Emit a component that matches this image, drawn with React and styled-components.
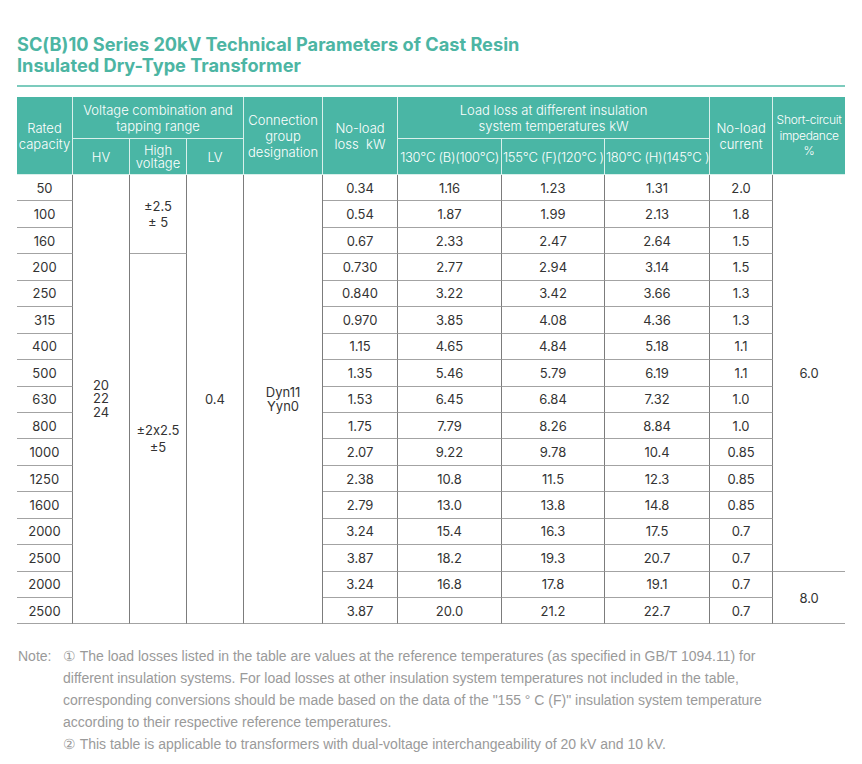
import styled, { createGlobalStyle } from "styled-components";

const GlobalStyle = createGlobalStyle`
    html, body {
        margin: 0;
        padding: 0;
        background: #fff;
    }
    body {
        font-family: Inter, "Noto Sans", "Liberation Sans", sans-serif;
        font-feature-settings: "calt" 0;
        color: #333;
    }
`;

const TEAL = "#4ab6a5";

const Page = styled.div`
    width: 828px;
    padding: 34px 17px 20px 17px;
`;

const Title = styled.h1`
    margin: 0;
    font-family: Inter, "Noto Sans", sans-serif;
    font-weight: 700;
    font-size: 18.2px;
    line-height: 21px;
    color: #4cb5a3;
    padding-bottom: 9px;
    border-bottom: 2px solid #7ccbbd;
`;

const Table = styled.table`
    margin-top: 10px;
    width: 828px;
    table-layout: fixed;
    border-collapse: separate;
    border-spacing: 0;
    font-size: 13px;
`;

const Head = styled.th`
    background: ${TEAL};
    color: #fff;
    font-weight: 300;
    font-size: ${p => p.$small ? "12px" : "13px"};
    line-height: ${p => p.$tight ? "13px" : p.$small ? "15.5px" : "16px"};
    text-align: center;
    vertical-align: middle;
    padding: 0 1px;
    height: ${p => p.$h || "auto"};
    border-right: ${p => p.$last ? "none" : "1.5px solid #d9f0eb"};
    border-bottom: 1.5px solid #d9f0eb;
    white-space: ${p => p.$nowrap ? "nowrap" : "normal"};
    letter-spacing: ${p => p.$nowrap ? "-0.3px" : "0"};
`;

const Cell = styled.td`
    text-align: center;
    vertical-align: middle;
    color: #333;
    font-weight: 400;
    font-size: 13px;
    line-height: ${p => p.$lh || "16px"};
    padding: 0;
    height: 25.45px;
    border-bottom: 1px solid #a3a3a3;
    border-right: ${p => p.$last ? "none" : "1px solid #7c7c7c"};
`;

const Note = styled.div`
    margin-top: 21px;
    display: grid;
    grid-template-columns: 46px 728px;
    font-family: "Liberation Sans", Arial, sans-serif;
    font-size: 14px;
    line-height: 22px;
    color: #9a9a9a;
`;

const NoteLabel = styled.span`
    padding-left: 1px;
`;

const NoteBody = styled.div`
    p {
        margin: 0;
    }
`;

const rows = [
    ["50", "0.34", "1.16", "1.23", "1.31", "2.0"],
    ["100", "0.54", "1.87", "1.99", "2.13", "1.8"],
    ["160", "0.67", "2.33", "2.47", "2.64", "1.5"],
    ["200", "0.730", "2.77", "2.94", "3.14", "1.5"],
    ["250", "0.840", "3.22", "3.42", "3.66", "1.3"],
    ["315", "0.970", "3.85", "4.08", "4.36", "1.3"],
    ["400", "1.15", "4.65", "4.84", "5.18", "1.1"],
    ["500", "1.35", "5.46", "5.79", "6.19", "1.1"],
    ["630", "1.53", "6.45", "6.84", "7.32", "1.0"],
    ["800", "1.75", "7.79", "8.26", "8.84", "1.0"],
    ["1000", "2.07", "9.22", "9.78", "10.4", "0.85"],
    ["1250", "2.38", "10.8", "11.5", "12.3", "0.85"],
    ["1600", "2.79", "13.0", "13.8", "14.8", "0.85"],
    ["2000", "3.24", "15.4", "16.3", "17.5", "0.7"],
    ["2500", "3.87", "18.2", "19.3", "20.7", "0.7"],
    ["2000", "3.24", "16.8", "17.8", "19.1", "0.7"],
    ["2500", "3.87", "20.0", "21.2", "22.7", "0.7"],
];

const widths = [56, 57, 57, 57, 79, 75, 104, 103, 105, 63, 72];

export default function App() {
    return <Page>
        <GlobalStyle />
        <Title>
            SC(B)10 Series 20kV Technical Parameters of Cast Resin<br />
            Insulated Dry-Type Transformer
        </Title>

        <Table>
            <colgroup>
                {widths.map((w, i) => <col key={i} style={{ width: w }} />)}
            </colgroup>
            <thead>
                <tr>
                    <Head rowSpan={2}>Rated<br />capacity</Head>
                    <Head colSpan={3} $h="41px">Voltage combination and<br />tapping range</Head>
                    <Head rowSpan={2}>Connection<br />group<br />designation</Head>
                    <Head rowSpan={2}>No-load<br />loss&nbsp;&nbsp;kW</Head>
                    <Head colSpan={3}>Load loss at different insulation<br />system temperatures kW</Head>
                    <Head rowSpan={2}>No-load<br />current</Head>
                    <Head rowSpan={2} $small $nowrap $last>Short-circuit<br />impedance<br />%</Head>
                </tr>
                <tr>
                    <Head $h="35px">HV</Head>
                    <Head $tight>High<br />voltage</Head>
                    <Head>LV</Head>
                    <Head $nowrap>130℃ (B)(100℃)</Head>
                    <Head $nowrap>155℃ (F)(120℃ )</Head>
                    <Head $nowrap>180℃ (H)(145℃ )</Head>
                </tr>
            </thead>
            <tbody>
                {rows.map((r, i) => <tr key={i}>
                    <Cell>{r[0]}</Cell>
                    {i === 0 && <Cell rowSpan={17} $lh="13.5px">20<br />22<br />24</Cell>}
                    {i === 0 && <Cell rowSpan={3}>±2.5<br />± 5</Cell>}
                    {i === 3 && <Cell rowSpan={14} $lh="16.5px">±2x2.5<br />±5</Cell>}
                    {i === 0 && <Cell rowSpan={17}>0.4</Cell>}
                    {i === 0 && <Cell rowSpan={17} $lh="14px">Dyn11<br />Yyn0</Cell>}
                    <Cell>{r[1]}</Cell>
                    <Cell>{r[2]}</Cell>
                    <Cell>{r[3]}</Cell>
                    <Cell>{r[4]}</Cell>
                    <Cell>{r[5]}</Cell>
                    {i === 0 && <Cell rowSpan={15} $last>6.0</Cell>}
                    {i === 15 && <Cell rowSpan={2} $last>8.0</Cell>}
                </tr>)}
            </tbody>
        </Table>

        <Note>
            <NoteLabel>Note:</NoteLabel>
            <NoteBody>
                <p>① The load losses listed in the table are values at the reference temperatures (as specified in GB/T 1094.11) for different insulation systems. For load losses at other insulation system temperatures not included in the table, corresponding conversions should be made based on the data of the "155 ° C (F)" insulation system temperature according to their respective reference temperatures.</p>
                <p>② This table is applicable to transformers with dual-voltage interchangeability of 20 kV and 10 kV.</p>
            </NoteBody>
        </Note>
    </Page>
}
